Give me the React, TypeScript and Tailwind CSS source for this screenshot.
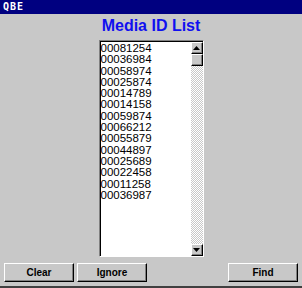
const IDS = [
  "00081254",
  "00036984",
  "00058974",
  "00025874",
  "00014789",
  "00014158",
  "00059874",
  "00066212",
  "00055879",
  "00044897",
  "00025689",
  "00022458",
  "00011258",
  "00036987",
];

function Win95Button({ label, className = "" }: { label: string; className?: string }) {
  return (
    <button
      type="button"
      className={`h-[19px] border border-t-white border-l-white border-r-black border-b-black bg-[#c8c8c8] shadow-[inset_-1px_-1px_0_#808080] text-[10px] font-bold leading-none text-black ${className}`}
    >
      {label}
    </button>
  );
}

function ArrowBox({ up }: { up: boolean }) {
  return (
    <div className="flex h-[12px] w-[12px] items-center justify-center border border-t-white border-l-white border-r-black border-b-black bg-[#c8c8c8] shadow-[inset_-1px_-1px_0_#808080]">
      <svg width="7" height="4" viewBox="0 0 7 4">
        {up ? <path d="M3.5 0 L7 4 L0 4 Z" fill="#000" /> : <path d="M0 0 L7 0 L3.5 4 Z" fill="#000" />}
      </svg>
    </div>
  );
}

export default function App() {
  return (
    <div
      className="flex h-[288px] w-[302px] flex-col bg-[#c8c8c8] border-b-2 border-b-[#404040]"
      style={{ fontFamily: '"Liberation Sans", Arial, sans-serif' }}
    >
      <div className="flex h-[14px] items-center bg-[#000080] px-[3px] text-[10px] font-bold leading-none tracking-[1px] text-white" style={{ fontFamily: '"DejaVu Sans Mono", monospace' }}>
        QBE
      </div>
      <h1 className="mt-[2px] text-center text-[16px] font-bold leading-[20px] text-[#1010f0]">Media ID List</h1>
      <div className="mx-auto mt-[4px] flex h-[217px] w-[105px] border border-t-[#808080] border-l-[#808080] border-r-white border-b-white bg-white shadow-[inset_1px_1px_0_#000]">
        <ul className="flex-1 pl-[1px] pt-[2px] text-[11.5px] leading-[11.3px] text-black">
          {IDS.map((id) => (
            <li key={id}>{id}</li>
          ))}
        </ul>
        <div className="flex w-[12px] flex-col mt-[1px] bg-[repeating-conic-gradient(#ffffff_0_25%,#c8c8c8_0_50%)] bg-[length:2px_2px]">
          <ArrowBox up />
          <div className="h-[12px] w-[12px] border border-t-white border-l-white border-r-black border-b-black bg-[#c8c8c8] shadow-[inset_-1px_-1px_0_#808080]" />
          <div className="flex-1" />
          <ArrowBox up={false} />
        </div>
      </div>
      <div className="mt-[6px] flex px-[4px]">
        <Win95Button label="Clear" className="w-[70px]" />
        <Win95Button label="Ignore" className="ml-[3px] w-[70px]" />
        <Win95Button label="Find" className="ml-auto w-[70px]" />
      </div>
    </div>
  );
}
